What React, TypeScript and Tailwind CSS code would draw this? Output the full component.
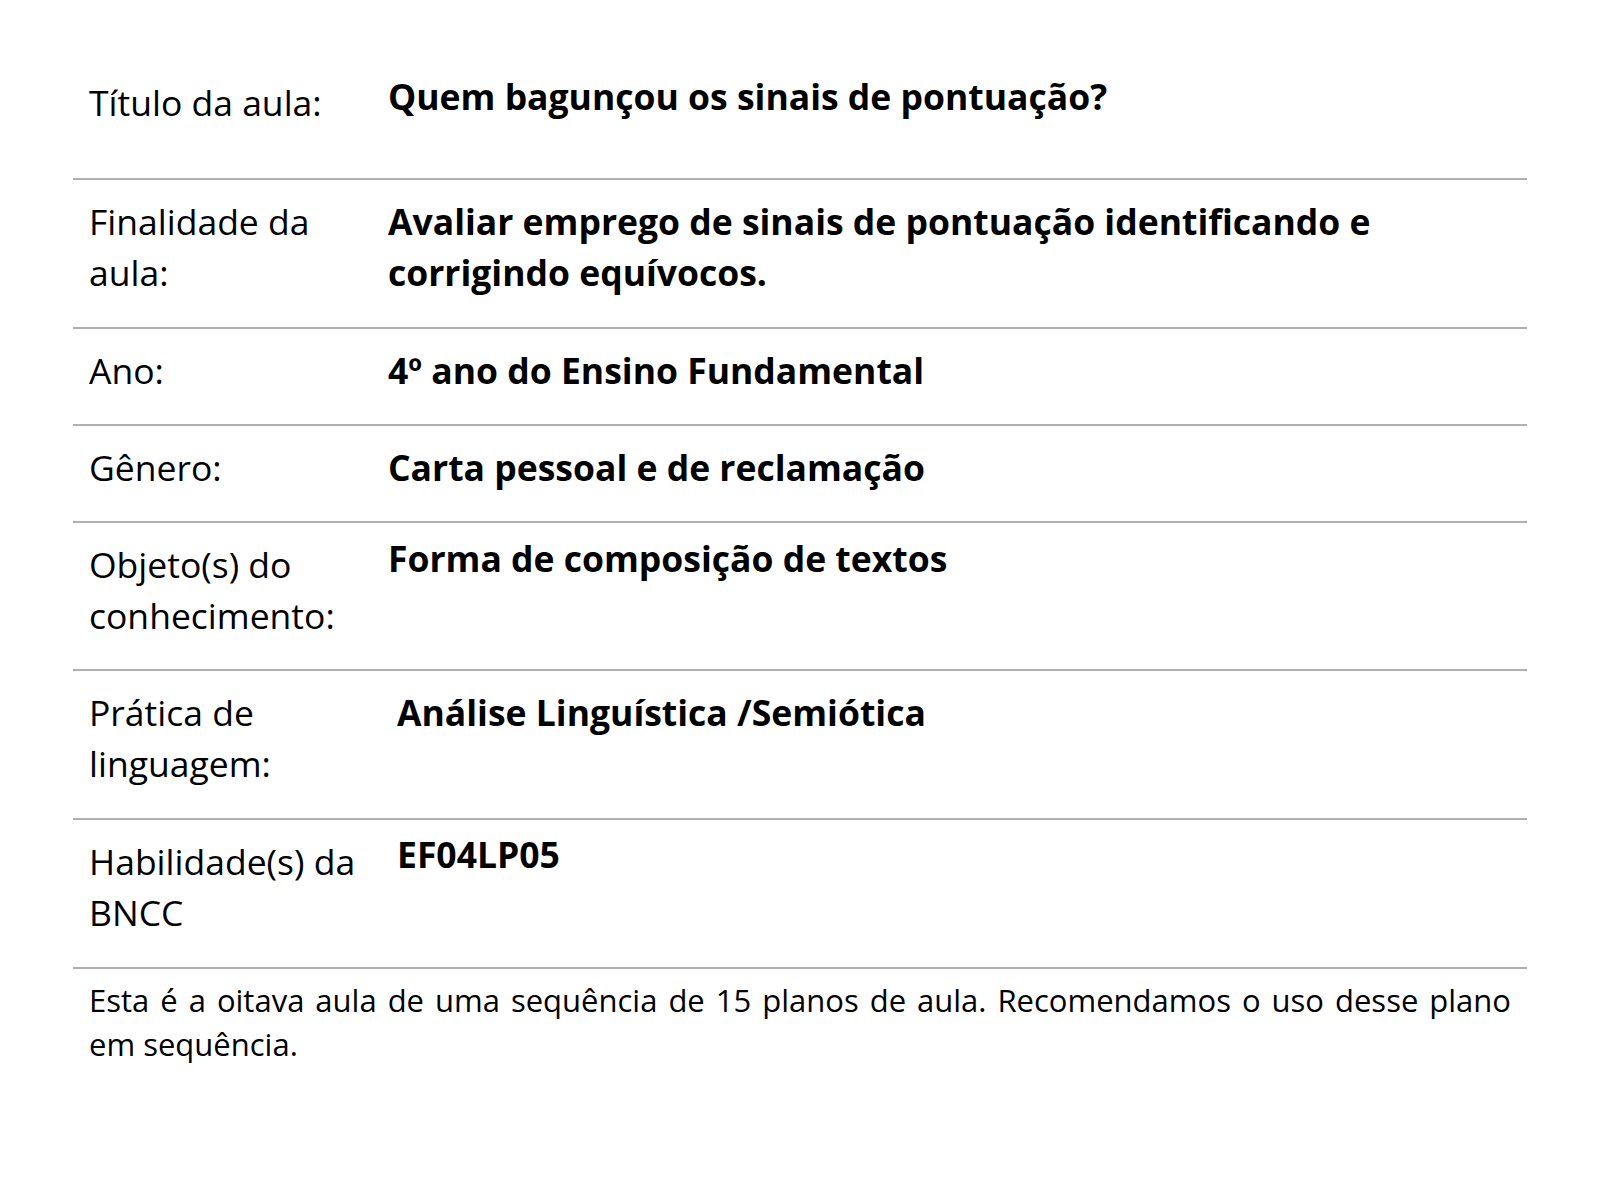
import React from "react";

type RowProps = {
  label: React.ReactNode;
  value: React.ReactNode;
  hClass: string;
  labelClass: string;
  valueClass: string;
};

function Row({ label, value, hClass, labelClass, valueClass }: RowProps) {
  return (
    <div className={`flex border-b-2 border-[#b0b0b0] ${hClass}`}>
      <div className={`w-[315px] shrink-0 pl-4 pr-[18px] text-[35.5px] leading-[51px] text-black ${labelClass}`}>
        {label}
      </div>
      <div className={`flex-1 pr-4 text-[35.5px] leading-[51px] font-bold text-black ${valueClass}`}>
        {value}
      </div>
    </div>
  );
}

export default function App() {
  return (
    <div
      className="w-[1600px] h-[1200px] bg-white pt-[65px] pl-[73px]"
      style={{ fontFamily: '"Open Sans", "Noto Sans", sans-serif' }}
    >
      <div className="w-[1454px]">
        <Row
          hClass="h-[115px]"
          labelClass="pt-[12px]"
          valueClass="pt-[6px]"
          label="Título da aula:"
          value="Quem bagunçou os sinais de pontuação?"
        />
        <Row
          hClass="h-[149px]"
          labelClass="pt-[16px]"
          valueClass="pt-[16px]"
          label="Finalidade da aula:"
          value="Avaliar emprego de sinais de pontuação identificando e corrigindo equívocos."
        />
        <Row
          hClass="h-[97px]"
          labelClass="pt-[16px]"
          valueClass="pt-[16px]"
          label="Ano:"
          value="4º ano do Ensino Fundamental"
        />
        <Row
          hClass="h-[97px]"
          labelClass="pt-[16px]"
          valueClass="pt-[16px]"
          label="Gênero:"
          value="Carta pessoal e de reclamação"
        />
        <Row
          hClass="h-[148px]"
          labelClass="pt-[16px]"
          valueClass="pt-[10px]"
          label="Objeto(s) do conhecimento:"
          value="Forma de composição de textos"
        />
        <Row
          hClass="h-[149px]"
          labelClass="pt-[16px]"
          valueClass="pt-[16px] pl-[9px]"
          label="Prática de linguagem:"
          value="Análise Linguística /Semiótica"
        />
        <Row
          hClass="h-[149px]"
          labelClass="pt-[16px]"
          valueClass="pt-[9px] pl-[9px]"
          label="Habilidade(s) da BNCC"
          value="EF04LP05"
        />
        <p className="px-4 pt-[9px] text-[31px] leading-[44px] text-black text-justify">
          Esta é a oitava aula de uma sequência de 15 planos de aula. Recomendamos o uso desse plano em sequência.
        </p>
      </div>
    </div>
  );
}
